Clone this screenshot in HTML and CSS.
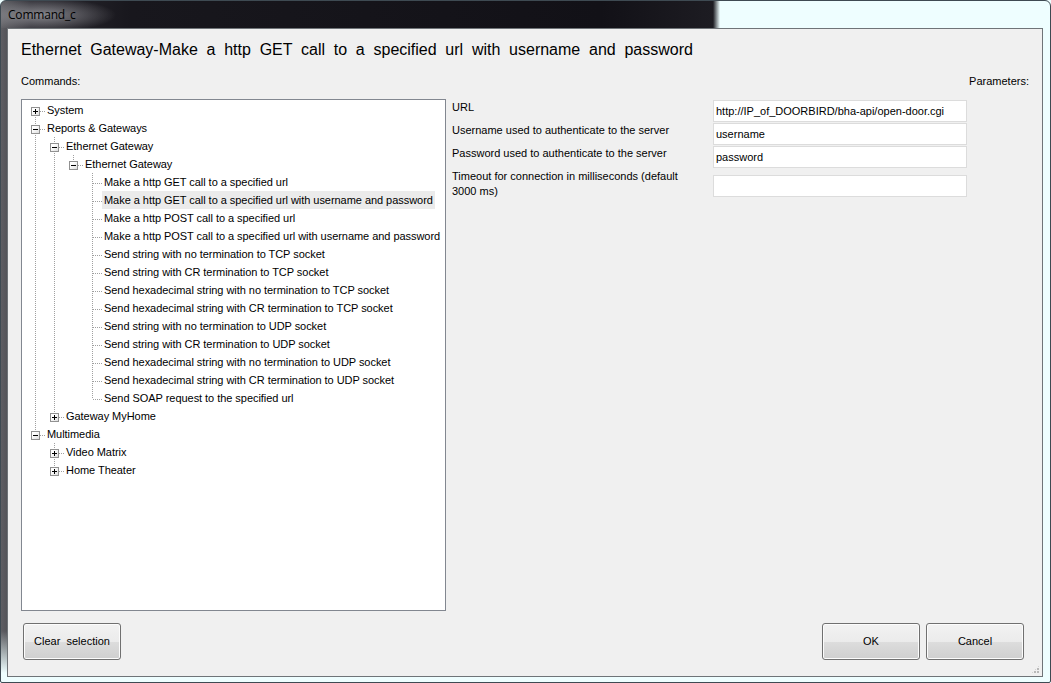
FILE: index.html
```html
<!DOCTYPE html>
<html lang="en">

<head>
    <meta charset="UTF-8">
    <meta name="viewport" content="width=device-width, initial-scale=1.0">
    <title>Command_c</title>
    <link rel="stylesheet" href="styles.css">
</head>

<body>
    <div class="window">
        <div class="titlebar"><span class="title">Command_c</span></div>

        <div class="client">
            <h1 class="heading">Ethernet Gateway-Make a http GET call to a specified url with username and password</h1>

            <div class="captions">
                <span>Commands:</span>
                <span>Parameters:</span>
            </div>

            <div class="main">
                <div class="tree">
                    <div class="row"><span class="cell first"><i class="box plus"></i></span><span class="label">System</span></div>
                    <div class="row"><span class="cell tee"><i class="box"></i></span><span class="label">Reports &amp; Gateways</span></div>
                    <div class="row"><span class="cell pipe"></span><span class="cell tee"><i class="box"></i></span><span class="label">Ethernet Gateway</span></div>
                    <div class="row"><span class="cell pipe"></span><span class="cell pipe"></span><span class="cell elbow"><i class="box"></i></span><span class="label">Ethernet Gateway</span></div>
                    <div class="row"><span class="cell pipe"></span><span class="cell pipe"></span><span class="cell"></span><span class="cell tee"></span><span class="label">Make a http GET call to a specified url</span></div>
                    <div class="row"><span class="cell pipe"></span><span class="cell pipe"></span><span class="cell"></span><span class="cell tee"></span><span class="label selected">Make a http GET call to a specified url with username and password</span></div>
                    <div class="row"><span class="cell pipe"></span><span class="cell pipe"></span><span class="cell"></span><span class="cell tee"></span><span class="label">Make a http POST call to a specified url</span></div>
                    <div class="row"><span class="cell pipe"></span><span class="cell pipe"></span><span class="cell"></span><span class="cell tee"></span><span class="label">Make a http POST call to a specified url with username and password</span></div>
                    <div class="row"><span class="cell pipe"></span><span class="cell pipe"></span><span class="cell"></span><span class="cell tee"></span><span class="label">Send string with no termination to TCP socket</span></div>
                    <div class="row"><span class="cell pipe"></span><span class="cell pipe"></span><span class="cell"></span><span class="cell tee"></span><span class="label">Send string with CR termination to TCP socket</span></div>
                    <div class="row"><span class="cell pipe"></span><span class="cell pipe"></span><span class="cell"></span><span class="cell tee"></span><span class="label">Send hexadecimal string with no termination to TCP socket</span></div>
                    <div class="row"><span class="cell pipe"></span><span class="cell pipe"></span><span class="cell"></span><span class="cell tee"></span><span class="label">Send hexadecimal string with CR termination to TCP socket</span></div>
                    <div class="row"><span class="cell pipe"></span><span class="cell pipe"></span><span class="cell"></span><span class="cell tee"></span><span class="label">Send string with no termination to UDP socket</span></div>
                    <div class="row"><span class="cell pipe"></span><span class="cell pipe"></span><span class="cell"></span><span class="cell tee"></span><span class="label">Send string with CR termination to UDP socket</span></div>
                    <div class="row"><span class="cell pipe"></span><span class="cell pipe"></span><span class="cell"></span><span class="cell tee"></span><span class="label">Send hexadecimal string with no termination to UDP socket</span></div>
                    <div class="row"><span class="cell pipe"></span><span class="cell pipe"></span><span class="cell"></span><span class="cell tee"></span><span class="label">Send hexadecimal string with CR termination to UDP socket</span></div>
                    <div class="row"><span class="cell pipe"></span><span class="cell pipe"></span><span class="cell"></span><span class="cell elbow"></span><span class="label">Send SOAP request to the specified url</span></div>
                    <div class="row"><span class="cell pipe"></span><span class="cell elbow"><i class="box plus"></i></span><span class="label">Gateway MyHome</span></div>
                    <div class="row"><span class="cell elbow"><i class="box"></i></span><span class="label">Multimedia</span></div>
                    <div class="row"><span class="cell"></span><span class="cell tee"><i class="box plus"></i></span><span class="label">Video Matrix</span></div>
                    <div class="row"><span class="cell"></span><span class="cell elbow"><i class="box plus"></i></span><span class="label">Home Theater</span></div>
                </div>

                <div class="params">
                    <div class="param">
                        <label class="param-name">URL</label>
                        <input class="field" type="text" value="http://IP_of_DOORBIRD/bha-api/open-door.cgi">
                    </div>
                    <div class="param">
                        <label class="param-name">Username used to authenticate to the server</label>
                        <input class="field" type="text" value="username">
                    </div>
                    <div class="param">
                        <label class="param-name">Password used to authenticate to the server</label>
                        <input class="field" type="text" value="password">
                    </div>
                    <div class="param tall">
                        <label class="param-name">Timeout for connection in milliseconds (default 3000 ms)</label>
                        <input class="field" type="text" value="">
                    </div>
                </div>
            </div>

            <div class="buttons">
                <button class="btn">Clear&nbsp; selection</button>
                <span class="spacer"></span>
                <button class="btn">OK</button>
                <button class="btn">Cancel</button>
            </div>

            <span class="grip"></span>
        </div>
    </div>
</body>

</html>
```

FILE: styles.css
```css
* {
    box-sizing: border-box;
}

html,
body {
    margin: 0;
    width: 1051px;
    height: 683px;
    overflow: hidden;
    background: #eefeff;
    font-family: 'Liberation Sans', Arial, sans-serif;
    font-size: 11px;
    color: #000;
}

/* window frame */
.window {
    width: 1051px;
    height: 683px;
    display: flex;
    flex-direction: column;
    border: 1px solid #3e4a52;
    border-radius: 6px 6px 2px 2px;
    background:
        linear-gradient(to bottom, transparent 630px, #eefeff 672px),
        linear-gradient(to right, #5e5e63 0, #2b2a31 30px, #18171d 130px, #121117 600px, #1d1c22 712px, #eefeff 719px);
}

.titlebar {
    height: 27px;
    flex: none;
    display: flex;
    align-items: center;
    padding-left: 7px;
    background: radial-gradient(ellipse 75px 17px at 40px 14px, rgba(175, 175, 180, .7), transparent);
}

.title {
    font-family: 'Open Sans', 'Liberation Sans', sans-serif;
    font-size: 12px;
    letter-spacing: -.2px;
    color: #000;
}

.client {
    position: relative;
    flex: 1;
    margin: 0 7px 5px 6px;
    padding: 0 13px 0 13px;
    display: flex;
    flex-direction: column;
    background: #f0f0f0;
    border: 1px solid #6f7478;
}

.heading {
    margin: 11px 0 0;
    font-size: 16px;
    line-height: 20px;
    font-weight: normal;
    word-spacing: 4.3px;
}

.captions {
    display: flex;
    justify-content: space-between;
    margin-top: 14px;
    line-height: 15px;
}

/* commands tree + parameters */
.main {
    display: flex;
    gap: 6px;
    margin-top: 10px;
    height: 512px;
}

.tree {
    --v: repeating-linear-gradient(to bottom, #a0a0a0 0 1px, transparent 1px 2px);
    --h: repeating-linear-gradient(to right, #a0a0a0 0 1px, transparent 1px 2px);
    width: 425px;
    flex: none;
    padding: 1px 0 0 4px;
    background: #fff;
    border: 1px solid #828790;
    letter-spacing: -.045px;
}

.row {
    display: flex;
    height: 18px;
    line-height: 18px;
    white-space: nowrap;
}

.cell {
    width: 19px;
    height: 18px;
    flex: none;
    display: flex;
    align-items: flex-start;
}

.pipe {
    background: var(--v) 9px 0 / 1px 100% no-repeat;
}

.tee {
    background:
        var(--h) 10px 10px / 9px 1px no-repeat,
        var(--v) 9px 0 / 1px 100% no-repeat;
}

.elbow {
    background:
        var(--h) 10px 10px / 9px 1px no-repeat,
        var(--v) 9px 0 / 1px 10px no-repeat;
}

.first {
    background:
        var(--h) 10px 10px / 9px 1px no-repeat,
        var(--v) 9px 10px / 1px 8px no-repeat;
}

.box {
    display: block;
    width: 9px;
    height: 9px;
    margin: 6px 0 0 5px;
    border: 1px solid #919191;
    background:
        linear-gradient(#000, #000) 1px 3px / 5px 1px no-repeat,
        linear-gradient(135deg, #fff 30%, #dedede);
}

.box.plus {
    background:
        linear-gradient(#000, #000) 1px 3px / 5px 1px no-repeat,
        linear-gradient(#000, #000) 3px 1px / 1px 5px no-repeat,
        linear-gradient(135deg, #fff 30%, #dedede);
}

.label {
    padding: 0 2px;
}

.selected {
    background: #ebebeb;
}

.params {
    flex: 1;
    padding-top: 1px;
}

.param {
    display: flex;
    align-items: flex-start;
    height: 23px;
}

.param.tall {
    height: 30px;
}

.param-name {
    width: 236px;
    margin-right: 25px;
    line-height: 15px;
}

.field {
    width: 254px;
    height: 22px;
    margin: 0;
    padding: 0 2px;
    border: 1px solid #dcdcdc;
    background: #fff;
    font-family: inherit;
    font-size: 11px;
    color: #000;
    outline: none;
}

.tall .field {
    margin-top: 6px;
}

/* dialog buttons */
.buttons {
    display: flex;
    gap: 6px;
    margin: 12px 5px 0 2px;
}

.spacer {
    flex: 1;
}

.btn {
    width: 98px;
    height: 37px;
    padding: 0 0 1px;
    border: 1px solid #707070;
    border-radius: 3px;
    box-shadow: inset 0 0 0 1px #fcfcfc;
    background: linear-gradient(to bottom, #f2f2f2 0, #ebebeb 50%, #dddddd 50%, #cfcfcf 100%);
    font-family: inherit;
    font-size: 11px;
    color: #000;
}

.grip {
    position: absolute;
    right: 2px;
    bottom: 2px;
    width: 9px;
    height: 9px;
    background:
        radial-gradient(circle at 1px 1px, #b8b8b8 1px, transparent 1.2px) 0 0 / 3px 3px;
    clip-path: polygon(100% 0, 100% 100%, 0 100%);
}
```
